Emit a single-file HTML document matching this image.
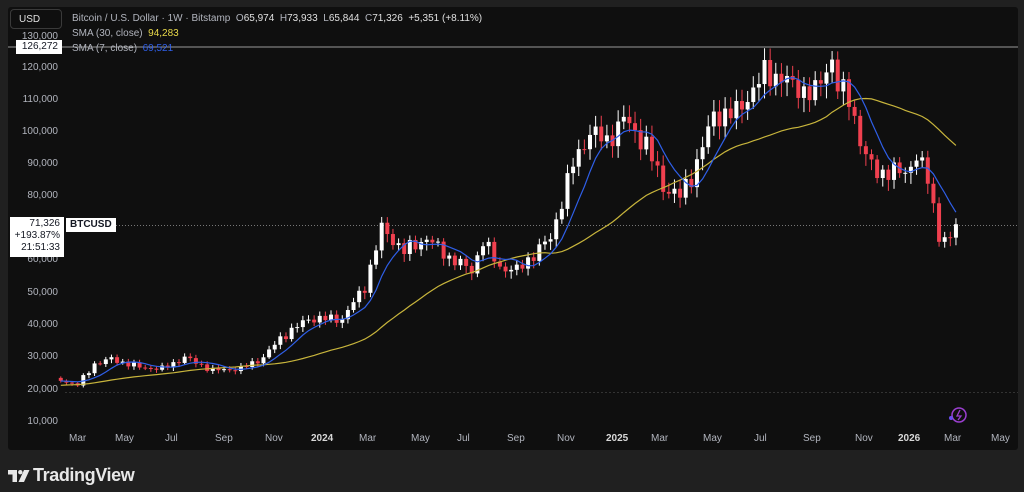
<!DOCTYPE html>
<html><head><meta charset="utf-8"><style>
*{margin:0;padding:0;box-sizing:border-box}
body{width:1024px;height:492px;background:#202020;font-family:"Liberation Sans",sans-serif;position:relative;overflow:hidden;color:#d1d4dc}
#panel{position:absolute;left:8px;top:7px;width:1010px;height:443px;background:#0f0f0f;border-radius:3px}
.ax{position:absolute;font-size:10px;color:#b2b5be}
.ya{position:absolute;left:10px;width:48px;text-align:right;font-size:10px;color:#b2b5be}
.usd{position:absolute;left:10px;top:9px;width:52px;height:20px;border:1px solid #3a3a3a;border-radius:4px;font-size:10px;color:#e0e0e0;padding:4px 0 0 8px}
.leg{position:absolute;left:72px;font-size:10px;color:#b2b5be;white-space:nowrap}
.leg b{font-weight:normal;color:#e0e0e0}
.lab{position:absolute;background:#fff;color:#131722;font-size:10px;text-align:right;padding:1px 4px}
</style></head><body>
<div id="panel"></div>
<svg id="c" width="1024" height="492" style="position:absolute;left:0;top:0"></svg>
<div class="usd">USD</div>
<div class="leg" style="top:13px">Bitcoin / U.S. Dollar · 1W · Bitstamp &nbsp;O<b>65,974</b> &nbsp;H<b>73,933</b> &nbsp;L<b>65,844</b> &nbsp;C<b>71,326</b> &nbsp;<b>+5,351 (+8.11%)</b></div>
<div class="leg" style="top:28px">SMA (30, close) &nbsp;<span style="color:#e8d84a">94,283</span></div>
<div class="leg" style="top:43px">SMA (7, close) &nbsp;<span style="color:#2f5fe8">69,521</span></div>
<div class="ya" style="top:31px">130,000</div>
<div class="ya" style="top:62px">120,000</div>
<div class="ya" style="top:94px">110,000</div>
<div class="ya" style="top:126px">100,000</div>
<div class="ya" style="top:158px">90,000</div>
<div class="ya" style="top:190px">80,000</div>
<div class="ya" style="top:254px">60,000</div>
<div class="ya" style="top:287px">50,000</div>
<div class="ya" style="top:319px">40,000</div>
<div class="ya" style="top:351px">30,000</div>
<div class="ya" style="top:384px">20,000</div>
<div class="ya" style="top:416px">10,000</div>
<div class="lab" style="left:16px;top:40px;width:46px;height:14px">126,272</div>
<div class="lab" style="left:10px;top:217px;width:54px;height:40px;line-height:12px;padding-top:1px">71,326<br>+193.87%<br>21:51:33</div>
<div class="lab" style="left:66px;top:218px;height:14px;font-weight:bold;text-align:left">BTCUSD</div>
<div id="xl"></div>
<svg width="22" height="14" style="position:absolute;left:8px;top:469px"><rect x="0" y="1" width="9" height="4.5" fill="#e8e8e8"/><rect x="4.5" y="1" width="4.5" height="12" fill="#e8e8e8"/><circle cx="12.3" cy="3.2" r="2.2" fill="#e8e8e8"/><polygon points="16,1 21.5,1 16,13 10.5,13" fill="#e8e8e8"/></svg>
<div style="position:absolute;left:33px;top:465px;font-size:18px;color:#e8e8e8;font-weight:bold;letter-spacing:-0.4px">TradingView</div>
<script>
var svg=document.getElementById('c'),h='';
function Y(p){return 422-(p-10000)*0.003225;}
function X(w){return 27+w*5.63;}
h+='<line x1="8" y1="47" x2="1018" y2="47" stroke="#9a9a9a" stroke-width="1"/>';
h+='<line x1="110" y1="225.5" x2="1018" y2="225.5" stroke="#777" stroke-dasharray="1,2"/>';
h+='<line x1="65" y1="392.5" x2="1018" y2="392.5" stroke="#333" stroke-dasharray="2,2"/>';
var k=[[-30,19000],[6,23000],[9,21500],[12,28000],[15,29500],[20,27000],[24,26500],[28,30000],[33,26000],[38,26500],[42,30000],[45,36000],[50,42000],[56,42000],[60,52000],[63,70000],[67,63000],[71,67000],[75,61000],[79,57000],[81,66000],[84,58000],[87,57000],[90,62000],[93,67000],[97,90000],[100,100000],[103,97000],[106,104000],[110,96000],[113,83000],[116,80000],[118,86000],[122,105000],[126,106000],[131,118000],[134,117000],[136,114000],[140,112000],[143,123000],[144,114000],[146,110000],[149,92000],[151,87000],[153,88000],[156,87000],[158,93000],[160,85000],[162,68000],[164,66000],[165,71326]];
var P=[];
for(var w=-30;w<=165;w++){var i=0;while(k[i+1][0]<w)i++;var a=k[i],b=k[i+1]||a;var t=(w-a[0])/((b[0]-a[0])||1);var v=a[1]+(b[1]-a[1])*t;if(w>-30&&w<165)v*=1+0.025*Math.sin(w*2.7)+0.015*Math.cos(w*1.3);P.push([w,v]);}
function sma(n,col){var d='';for(var j=0;j<P.length;j++){if(P[j][0]<6)continue;var s=0;for(var q=0;q<n;q++)s+=P[Math.max(0,j-q)][1];d+=(d?'L':'M')+X(P[j][0]).toFixed(1)+' '+Y(s/n).toFixed(1);}h+='<path d="'+d+'" fill="none" stroke="'+col+'" stroke-width="1.2"/>';}
for(var j=1;j<P.length;j++){var w=P[j][0];if(w<6)continue;var o=P[j-1][1],c=P[j][1];var hi=Math.max(o,c)*(1+0.015+0.02*Math.abs(Math.sin(w*3.1))),lo=Math.min(o,c)*(1-0.015-0.025*Math.abs(Math.cos(w*2.3)));var x=X(w),col=c>=o?'#ffffff':'#f0404f';h+='<line x1="'+x+'" x2="'+x+'" y1="'+Y(hi)+'" y2="'+Y(lo)+'" stroke="'+col+'" stroke-width="1"/>';var yt=Y(Math.max(o,c)),hh=Math.max(1,Y(Math.min(o,c))-yt);h+='<rect x="'+(x-2)+'" y="'+yt+'" width="4" height="'+hh+'" fill="'+col+'"/>';}
sma(30,'#c8b53c');sma(7,'#2f5fe8');
h+='<circle cx="959" cy="415" r="7" fill="none" stroke="#9b3fd0" stroke-width="1.5"/><path d="M960 410 L957 416 L961 416 L958 420" stroke="#9b3fd0" fill="none" stroke-width="1.3"/><circle cx="951" cy="418" r="2" fill="#6a4cf0"/>';
svg.innerHTML=h;
var m=[['Mar',78],['May',124],['Jul',174],['Sep',224],['Nov',274],['2024',320],['Mar',368],['May',420],['Jul',466],['Sep',516],['Nov',566],['2025',615],['Mar',660],['May',712],['Jul',763],['Sep',812],['Nov',864],['2026',907],['Mar',953],['May',1000]];
var s='';m.forEach(function(e){s+='<div class="ax" style="top:433px;left:'+(e[1]-9)+'px'+(/^20/.test(e[0])?';color:#d8d8d8;font-weight:bold':'')+'">'+e[0]+'</div>';});
document.getElementById('xl').innerHTML=s;
</script>
</body></html>
